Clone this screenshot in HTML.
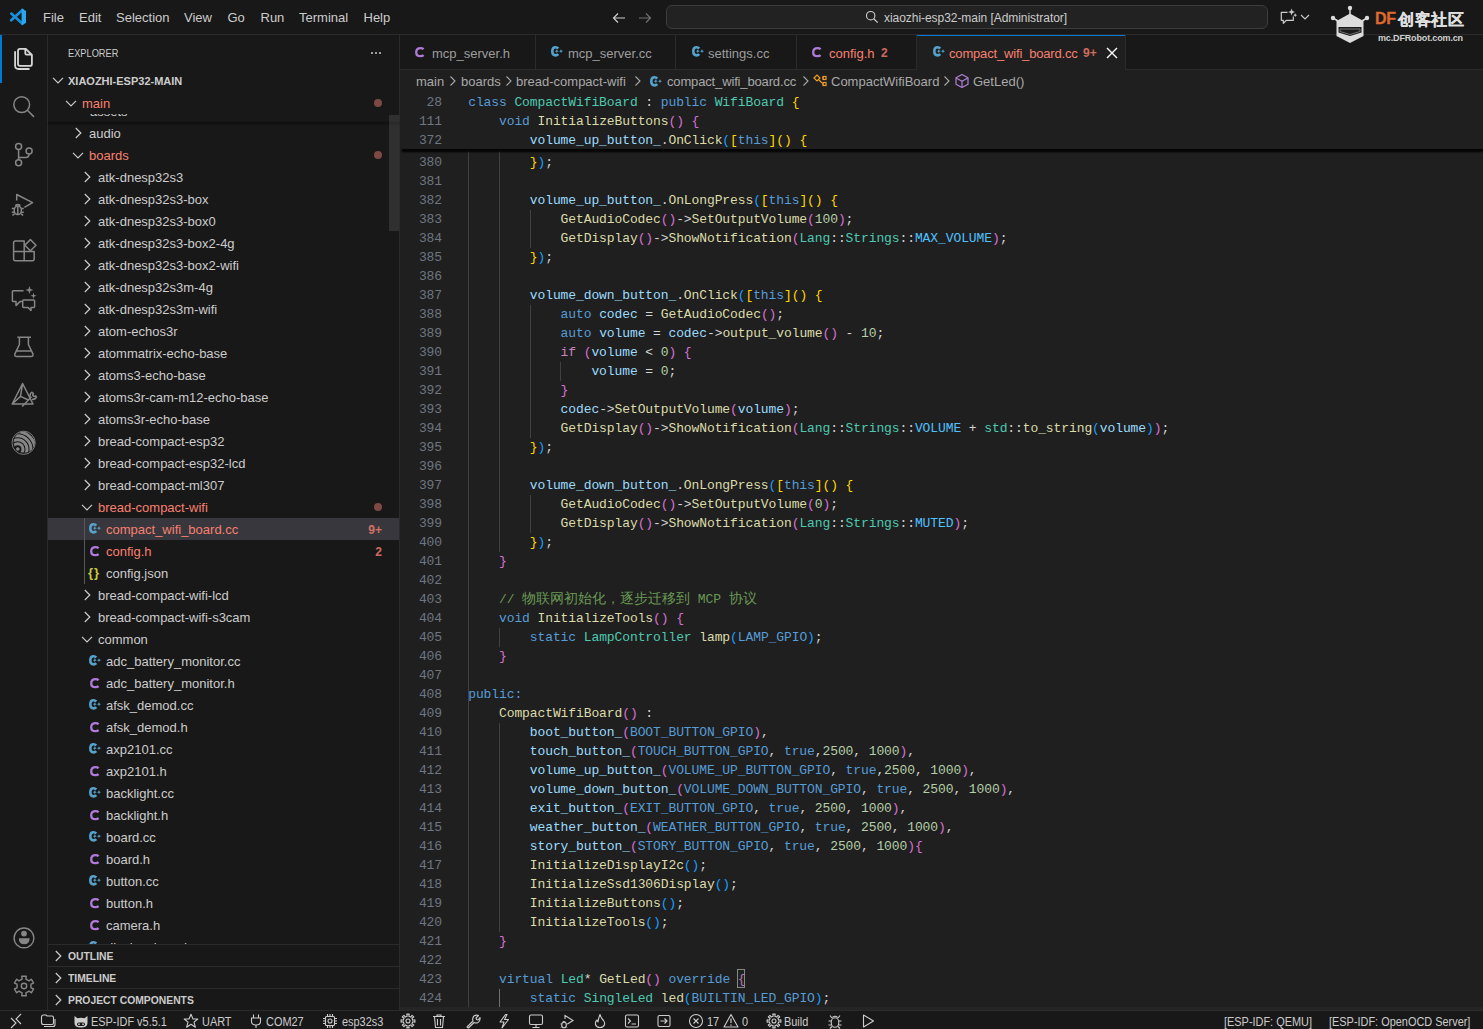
<!DOCTYPE html><html><head><meta charset="utf-8"><style>
*{margin:0;padding:0;box-sizing:border-box}
html,body{width:1483px;height:1029px;overflow:hidden;background:#181818}
body{position:relative;font-family:"Liberation Sans",sans-serif;color:#cccccc;font-size:13px}
.a{position:absolute}
.t{position:absolute;white-space:pre;line-height:1}
svg{position:absolute;overflow:visible}
.code{position:absolute;white-space:pre;font-family:"Liberation Mono",monospace;font-size:13px;letter-spacing:-0.1px;line-height:19px;height:19px;color:#d4d4d4}
.ln{position:absolute;width:40px;text-align:right;font-family:"Liberation Mono",monospace;font-size:13px;letter-spacing:-0.1px;line-height:19px;color:#6e7681}
.kw{color:#569cd6}.ctl{color:#c586c0}.ty{color:#4ec9b0}.fn{color:#dcdcaa}.v{color:#9cdcfe}.n{color:#b5cea8}
.mac{color:#569cd6}.en{color:#4fc1ff}.cm{color:#6a9955}.b1{color:#ffd700}.b2{color:#da70d6}.b3{color:#179fff}
.row{position:absolute;left:48px;width:351px;height:22px}
.rt{position:absolute;white-space:pre;font-size:13px;line-height:22px;top:0}
.err{color:#f88070}
</style></head><body>
<div class="a" style="left:0px;top:0px;width:1483px;height:34px;background:#181818;"></div>
<div class="a" style="left:0px;top:34px;width:1483px;height:1px;background:#2b2b2b;"></div>
<div class="a" style="left:47px;top:35px;width:1px;height:975px;background:#2b2b2b;"></div>
<div class="a" style="left:399px;top:35px;width:1px;height:975px;background:#2b2b2b;"></div>
<div class="a" style="left:400px;top:70px;width:1083px;height:940px;background:#1f1f1f;"></div>
<div class="a" style="left:0px;top:1010px;width:1483px;height:1px;background:#2b2b2b;"></div>
<svg style="left:0px;top:0px" width="32" height="32" viewBox="0 0 32 32">
<path d="M22.5 10L11.2 20.3M22.5 23.8L11.3 13.6" stroke="#1a8ed8" stroke-width="2.7" stroke-linecap="round"/>
<path d="M21.6 8.6L26 10.9V22.9L21.6 25.1Z" fill="#27a7f0"/>
</svg>
<div class="t" style="left:43px;top:11px;font-size:13px;color:#cccccc">File</div>
<div class="t" style="left:79px;top:11px;font-size:13px;color:#cccccc">Edit</div>
<div class="t" style="left:116px;top:11px;font-size:13px;color:#cccccc">Selection</div>
<div class="t" style="left:184px;top:11px;font-size:13px;color:#cccccc">View</div>
<div class="t" style="left:227.5px;top:11px;font-size:13px;color:#cccccc">Go</div>
<div class="t" style="left:260.5px;top:11px;font-size:13px;color:#cccccc">Run</div>
<div class="t" style="left:299px;top:11px;font-size:13px;color:#cccccc">Terminal</div>
<div class="t" style="left:363.5px;top:11px;font-size:13px;color:#cccccc">Help</div>
<svg style="left:611px;top:10px" width="16" height="16" viewBox="0 0 16 16"><path d="M14 8H2.5M7 3.5L2.5 8L7 12.5" stroke="#cccccc" stroke-width="1.2" fill="none"/></svg>
<svg style="left:637px;top:10px" width="16" height="16" viewBox="0 0 16 16"><path d="M2 8H13.5M9 3.5L13.5 8L9 12.5" stroke="#707070" stroke-width="1.2" fill="none"/></svg>
<div class="a" style="left:666px;top:5px;width:602px;height:24px;background:#222222;border:1px solid #3c3c3c;border-radius:6px;"></div>
<svg style="left:865px;top:10px" width="14" height="14" viewBox="0 0 16 16"><circle cx="6.5" cy="6.5" r="4.8" stroke="#cccccc" stroke-width="1.3" fill="none"/><path d="M10 10L14.5 14.5" stroke="#cccccc" stroke-width="1.4"/></svg>
<div class="t" style="left:884px;top:11.5px;font-size:12px;color:#cccccc;letter-spacing:-0.05px">xiaozhi-esp32-main [Administrator]</div>
<svg style="left:1270px;top:0px" width="30" height="30" viewBox="1270 0 30 30">
<path d="M1287.5 12.3H1281.3V20.3H1283.3V23.3L1286.5 20.3H1293.3V16.5" stroke="#cccccc" stroke-width="1.2" fill="none" stroke-linejoin="round"/>
<path d="M1291.6 8.6L1292.5 11.1L1295 12L1292.5 12.9L1291.6 15.4L1290.7 12.9L1288.2 12L1290.7 11.1Z" fill="#cccccc"/>
<path d="M1295.2 13.2L1295.8 14.6L1297.2 15.2L1295.8 15.8L1295.2 17.2L1294.6 15.8L1293.2 15.2L1294.6 14.6Z" fill="#cccccc"/>
</svg>
<svg style="left:1300px;top:13px" width="10" height="8" viewBox="0 0 10 8"><path d="M1 2L5 6L9 2" stroke="#cccccc" stroke-width="1.1" fill="none"/></svg>
<div class="a" style="left:400px;top:35px;width:1083px;height:35px;background:#181818;"></div>
<div class="a" style="left:400px;top:69px;width:1083px;height:1px;background:#2b2b2b;"></div>
<div class="a" style="left:535px;top:35px;width:1px;height:34px;background:#2b2b2b;"></div>
<div class="a" style="left:675px;top:35px;width:1px;height:34px;background:#2b2b2b;"></div>
<div class="a" style="left:796px;top:35px;width:1px;height:34px;background:#2b2b2b;"></div>
<div class="a" style="left:916px;top:35px;width:1px;height:34px;background:#2b2b2b;"></div>
<div class="a" style="left:917px;top:35px;width:208px;height:35px;background:#1f1f1f;"></div>
<div class="a" style="left:917px;top:35px;width:208px;height:1px;background:#0078d4;"></div>
<div class="a" style="left:1125px;top:35px;width:1px;height:34px;background:#2b2b2b;"></div>
<svg style="left:415.2px;top:46.7px" width="10" height="10.3" viewBox="0 0 10 10.3">
<path d="M8.6 2.2Q7.5 1.1 5.6 1.1Q1.2 1.1 1.2 5.15Q1.2 9.2 5.6 9.2Q7.5 9.2 8.6 8.1" stroke="#b07ad8" stroke-width="2.3" fill="none"/></svg>
<div class="t" style="left:432px;top:47px;font-size:13px;color:#9d9d9d">mcp_server.h</div>
<svg style="left:551px;top:46px" width="13" height="11" viewBox="0 0 13 11">
<path d="M7.3 2.5Q6.1 1.3 4.6 1.3Q1.3 1.3 1.3 5.35Q1.3 9.4 4.6 9.4Q6.1 9.4 7.3 8.2" stroke="#55a2cc" stroke-width="2.6" fill="none"/>
<path d="M5.8 3.2L6.4 4.6L7.8 5.2L6.4 5.8L5.8 7.2L5.2 5.8L3.8 5.2L5.2 4.6Z" fill="#55a2cc"/>
<path d="M10 3.2L10.6 4.6L12 5.2L10.6 5.8L10 7.2L9.4 5.8L8 5.2L9.4 4.6Z" fill="#55a2cc"/>
</svg>
<div class="t" style="left:568px;top:47px;font-size:13px;color:#9d9d9d">mcp_server.cc</div>
<svg style="left:692px;top:46px" width="13" height="11" viewBox="0 0 13 11">
<path d="M7.3 2.5Q6.1 1.3 4.6 1.3Q1.3 1.3 1.3 5.35Q1.3 9.4 4.6 9.4Q6.1 9.4 7.3 8.2" stroke="#55a2cc" stroke-width="2.6" fill="none"/>
<path d="M5.8 3.2L6.4 4.6L7.8 5.2L6.4 5.8L5.8 7.2L5.2 5.8L3.8 5.2L5.2 4.6Z" fill="#55a2cc"/>
<path d="M10 3.2L10.6 4.6L12 5.2L10.6 5.8L10 7.2L9.4 5.8L8 5.2L9.4 4.6Z" fill="#55a2cc"/>
</svg>
<div class="t" style="left:708px;top:47px;font-size:13px;color:#9d9d9d">settings.cc</div>
<svg style="left:812.2px;top:46.7px" width="10" height="10.3" viewBox="0 0 10 10.3">
<path d="M8.6 2.2Q7.5 1.1 5.6 1.1Q1.2 1.1 1.2 5.15Q1.2 9.2 5.6 9.2Q7.5 9.2 8.6 8.1" stroke="#b07ad8" stroke-width="2.3" fill="none"/></svg>
<div class="t" style="left:829px;top:47px;font-size:13px;color:#f88070">config.h</div>
<div class="t" style="left:881px;top:47px;font-size:12px;font-weight:bold;color:#f88070;opacity:.8">2</div>
<svg style="left:933px;top:46px" width="13" height="11" viewBox="0 0 13 11">
<path d="M7.3 2.5Q6.1 1.3 4.6 1.3Q1.3 1.3 1.3 5.35Q1.3 9.4 4.6 9.4Q6.1 9.4 7.3 8.2" stroke="#55a2cc" stroke-width="2.6" fill="none"/>
<path d="M5.8 3.2L6.4 4.6L7.8 5.2L6.4 5.8L5.8 7.2L5.2 5.8L3.8 5.2L5.2 4.6Z" fill="#55a2cc"/>
<path d="M10 3.2L10.6 4.6L12 5.2L10.6 5.8L10 7.2L9.4 5.8L8 5.2L9.4 4.6Z" fill="#55a2cc"/>
</svg>
<div class="t" style="left:949px;top:47px;font-size:13px;color:#f88070;letter-spacing:-0.17px">compact_wifi_board.cc</div>
<div class="t" style="left:1083px;top:47px;font-size:12px;font-weight:bold;color:#f88070;opacity:.8">9+</div>
<svg style="left:1104px;top:45px" width="16" height="16" viewBox="0 0 16 16"><path d="M3 3L13 13M13 3L3 13" stroke="#ffffff" stroke-width="1.4"/></svg>
<div class="t" style="left:416px;top:74.5px;font-size:13px;color:#a9a9a9">main</div>
<svg style="left:449px;top:75px" width="8" height="12" viewBox="0 0 8 12"><path d="M1.5 1.5L6 6L1.5 10.5" stroke="#a9a9a9" stroke-width="1.1" fill="none"/></svg>
<div class="t" style="left:461px;top:74.5px;font-size:13px;color:#a9a9a9">boards</div>
<svg style="left:505px;top:75px" width="8" height="12" viewBox="0 0 8 12"><path d="M1.5 1.5L6 6L1.5 10.5" stroke="#a9a9a9" stroke-width="1.1" fill="none"/></svg>
<div class="t" style="left:516px;top:74.5px;font-size:13px;color:#a9a9a9">bread-compact-wifi</div>
<svg style="left:634px;top:75px" width="8" height="12" viewBox="0 0 8 12"><path d="M1.5 1.5L6 6L1.5 10.5" stroke="#a9a9a9" stroke-width="1.1" fill="none"/></svg>
<svg style="left:649.9px;top:75.6px" width="13" height="11" viewBox="0 0 13 11">
<path d="M7.3 2.5Q6.1 1.3 4.6 1.3Q1.3 1.3 1.3 5.35Q1.3 9.4 4.6 9.4Q6.1 9.4 7.3 8.2" stroke="#55a2cc" stroke-width="2.6" fill="none"/>
<path d="M5.8 3.2L6.4 4.6L7.8 5.2L6.4 5.8L5.8 7.2L5.2 5.8L3.8 5.2L5.2 4.6Z" fill="#55a2cc"/>
<path d="M10 3.2L10.6 4.6L12 5.2L10.6 5.8L10 7.2L9.4 5.8L8 5.2L9.4 4.6Z" fill="#55a2cc"/>
</svg>
<div class="t" style="left:667px;top:74.5px;font-size:13px;color:#a9a9a9;letter-spacing:-0.15px">compact_wifi_board.cc</div>
<svg style="left:802px;top:75px" width="8" height="12" viewBox="0 0 8 12"><path d="M1.5 1.5L6 6L1.5 10.5" stroke="#a9a9a9" stroke-width="1.1" fill="none"/></svg>
<svg style="left:812px;top:73px" width="16" height="16" viewBox="0 0 16 16">
<path d="M2 5L5 2L8 5L5 8Z" stroke="#ee9d28" stroke-width="1.2" fill="none"/>
<path d="M6.5 6.5L10 10M10 5H12M12 11H10" stroke="#ee9d28" stroke-width="1.2" fill="none"/>
<rect x="11" y="3.5" width="3" height="3" stroke="#ee9d28" stroke-width="1.2" fill="none"/>
<rect x="11" y="9.5" width="3" height="3" stroke="#ee9d28" stroke-width="1.2" fill="none"/></svg>
<div class="t" style="left:831px;top:74.5px;font-size:13px;color:#a9a9a9">CompactWifiBoard</div>
<svg style="left:943px;top:75px" width="8" height="12" viewBox="0 0 8 12"><path d="M1.5 1.5L6 6L1.5 10.5" stroke="#a9a9a9" stroke-width="1.1" fill="none"/></svg>
<svg style="left:954px;top:73px" width="16" height="16" viewBox="0 0 16 16">
<path d="M8 1.5L14 4.8V11.2L8 14.5L2 11.2V4.8Z" stroke="#b180d7" stroke-width="1.2" fill="none" stroke-linejoin="round"/>
<path d="M2.2 5L8 8.2L13.8 5M8 8.2V14.3" stroke="#b180d7" stroke-width="1.2" fill="none"/></svg>
<div class="t" style="left:973px;top:74.5px;font-size:13px;color:#a9a9a9">GetLed()</div>
<svg style="left:1325px;top:0px" width="150" height="50" viewBox="0 0 150 50">
<circle cx="25" cy="8" r="2.2" fill="#dcdcdc"/>
<path d="M25 8V14" stroke="#dcdcdc" stroke-width="1.5"/>
<circle cx="8" cy="18" r="2.2" fill="#dcdcdc"/>
<circle cx="42" cy="18" r="2.2" fill="#dcdcdc"/>
<path d="M8 18L13 21M42 18L37 21" stroke="#dcdcdc" stroke-width="1.5"/>
<path d="M25 13.5L38.5 21V36L25 43L11.5 36V21Z" fill="#dcdcdc"/>
<path d="M13.5 27H36.5V32.5L25 36L13.5 32.5Z" fill="#1a1a1a"/>
<path d="M15 29H35V31.5L25 34.5L15 31.5Z" fill="#1a1a1a" stroke="#8a8a8a" stroke-width="0.8"/>
</svg>
<div class="t" style="left:1375px;top:11px;font-size:16px;font-weight:bold;color:#dd6a2c;letter-spacing:-0.3px;-webkit-text-stroke:0.3px #dd6a2c">DF</div>
<div class="t" style="left:1398px;top:11px;font-size:16.3px;color:#e0e0e0;font-weight:bold;letter-spacing:0.6px;-webkit-text-stroke:0.15px #e0e0e0">创客社区</div>
<div class="t" style="left:1378px;top:34px;font-size:9px;font-weight:bold;color:#d0d0d0;letter-spacing:-0.15px">mc.DFRobot.com.cn</div>
<div class="a" style="left:0px;top:35px;width:2px;height:48px;background:#0078d4;"></div>
<svg style="left:0px;top:0px" width="48" height="470" viewBox="0 0 48 470">
<g transform="translate(12 46)">
<path d="M8 2.9H13.8L19.9 9V17.9Q19.9 19.9 17.9 19.9H8Q6 19.9 6 17.9V4.9Q6 2.9 8 2.9Z" stroke="#d7d7d7" stroke-width="1.8" fill="none" stroke-linejoin="round"/>
<path d="M13.3 3V7.2Q13.3 8.6 14.7 8.6H19.8" stroke="#d7d7d7" stroke-width="1.8" fill="none"/>
<path d="M3.1 5.3V19.5Q3.1 23 6.6 23H17.5" stroke="#d7d7d7" stroke-width="1.8" fill="none"/>
</g>
<circle cx="21.7" cy="104.6" r="7.9" stroke="#868686" fill="none" stroke-width="1.5" stroke-linejoin="round"/>
<path d="M27.4 110.3L34 116.9" stroke="#868686" fill="none" stroke-width="1.5" stroke-linejoin="round" stroke-width="1.7"/>
<circle cx="18.6" cy="146.6" r="3" stroke="#868686" fill="none" stroke-width="1.5" stroke-linejoin="round"/>
<circle cx="18.6" cy="162.8" r="3" stroke="#868686" fill="none" stroke-width="1.5" stroke-linejoin="round"/>
<circle cx="29.1" cy="151" r="3" stroke="#868686" fill="none" stroke-width="1.5" stroke-linejoin="round"/>
<path d="M18.6 149.6V159.8M29.1 154Q29.1 157.5 25.5 157.5H18.6" stroke="#868686" fill="none" stroke-width="1.5" stroke-linejoin="round"/>
<path d="M16.7 200.5V194.5L32.6 202.6L24.4 207.3" stroke="#868686" fill="none" stroke-width="1.5" stroke-linejoin="round"/>
<ellipse cx="17.8" cy="210.3" rx="3.6" ry="4.3" stroke="#868686" fill="none" stroke-width="1.5" stroke-linejoin="round"/>
<path d="M15.2 205.8Q17.8 203.5 20.4 205.8M11.8 208.5H14.2M21.4 208.5H23.8M11.8 212.2H14.2M21.4 212.2H23.8M12.5 215.5L14.6 213.6M23.1 215.5L21 213.6M17.8 206.5V214.2" stroke="#868686" fill="none" stroke-width="1.5" stroke-linejoin="round" stroke-width="1.3"/>
<path d="M13.6 242.8Q13.6 241 15.4 241H24.2V251.4H34.2V259Q34.2 260.7 32.4 260.7H15.4Q13.6 260.7 13.6 259Z M13.6 251.4H24.2V260.7" stroke="#868686" fill="none" stroke-width="1.5" stroke-linejoin="round"/>
<path d="M30.4 239.6L36 245.2L30.4 250.8L24.8 245.2Z" stroke="#868686" fill="none" stroke-width="1.5" stroke-linejoin="round"/>
<path d="M13.2 290.8H23.5M13.2 290.8Q12.4 290.8 12.4 291.6V300.8Q12.4 301.6 13.2 301.6H16V305.6L20 301.6H22.7" stroke="#868686" fill="none" stroke-width="1.5" stroke-linejoin="round"/>
<path d="M23.5 300H33.8Q34.6 300 34.6 300.8V306.6Q34.6 307.4 33.8 307.4H31V310.5L27.8 307.4H23.5Q22.7 307.4 22.7 306.6V300.8Q22.7 300 23.5 300Z" stroke="#868686" fill="none" stroke-width="1.5" stroke-linejoin="round"/>
<path d="M29.4 286L30.4 289L33.4 290L30.4 291L29.4 294L28.4 291L25.4 290L28.4 289Z" fill="#868686"/>
<path d="M33.5 292.6L34.2 295.1L36.7 295.8L34.2 296.5L33.5 299L32.8 296.5L30.3 295.8L32.8 295.1Z" fill="#868686"/>
<path d="M17.3 337.2H31M19.4 337.2V344.5L14.9 353.8Q14.2 356.5 16.8 356.5H31Q33.6 356.5 32.9 353.8L28.4 344.5V337.2M16.2 351H31.6" stroke="#868686" fill="none" stroke-width="1.5" stroke-linejoin="round"/>
<path d="M22.6 383.5L12.2 404H33L22.6 383.5L20.5 396.4L12.2 404M20.5 396.4L28.4 400" stroke="#868686" fill="none" stroke-width="1.5" stroke-linejoin="round"/>
<path d="M22.2 406.6L31.5 396.8" stroke="#868686" fill="none" stroke-width="1.5" stroke-linejoin="round" stroke-width="1.7"/>
<path d="M30.5 398Q29 394 32 392.2L33.4 393.6L32.6 395.2L34.1 396.6L35.5 395.8L36.5 397.2Q35 400 32 399.2" stroke="#868686" fill="none" stroke-width="1.5" stroke-linejoin="round" stroke-width="1.4"/>
<circle cx="23.6" cy="442.8" r="11.6" stroke="#868686" stroke-width="0.9" fill="none"/>
<clipPath id="espc"><circle cx="24.3" cy="442.2" r="10.6"/></clipPath>
<g clip-path="url(#espc)" stroke="#868686" fill="none" stroke-width="3">
<circle cx="17.6" cy="449.2" r="5.4"/>
<circle cx="17.6" cy="449.2" r="9.4"/>
<circle cx="17.6" cy="449.2" r="13.4"/>
<circle cx="17.6" cy="449.2" r="17.4"/>
</g>
<circle cx="17.8" cy="449" r="1.8" fill="#868686"/>
</svg>
<svg style="left:0px;top:900px" width="48" height="110" viewBox="0 900 48 110"><circle cx="24" cy="937.9" r="9.9" stroke="#868686" stroke-width="1.4" fill="none"/>
<circle cx="24" cy="933.6" r="2.9" fill="#868686"/>
<path d="M18.8 938.3H29.6Q29.6 944.3 24.2 944.3Q18.8 944.3 18.8 938.3Z" fill="#868686"/>
</svg>
<svg style="left:0px;top:900px" width="48" height="110" viewBox="0 900 48 110"><path d="M21.75 976.26 L26.25 976.26 L25.86 979.05 L29.09 980.91 L31.31 979.18 L33.56 983.08 L30.95 984.14 L30.95 987.86 L33.56 988.92 L31.31 992.82 L29.09 991.09 L25.86 992.95 L26.25 995.74 L21.75 995.74 L22.14 992.95 L18.91 991.09 L16.69 992.82 L14.44 988.92 L17.05 987.86 L17.05 984.14 L14.44 983.08 L16.69 979.18 L18.91 980.91 L22.14 979.05Z" stroke="#868686" stroke-width="1.4" fill="none" stroke-linejoin="round"/><circle cx="24" cy="986" r="2.7" stroke="#868686" stroke-width="1.4" fill="none"/></svg>
<div class="t" style="left:68px;top:47.5px;font-size:11px;color:#cccccc;transform:scaleX(0.84);transform-origin:0 0">EXPLORER</div>
<div class="a" style="left:371px;top:52px;width:2px;height:2px;background:#cccccc;border-radius:1px"></div>
<div class="a" style="left:375px;top:52px;width:2px;height:2px;background:#cccccc;border-radius:1px"></div>
<div class="a" style="left:379px;top:52px;width:2px;height:2px;background:#cccccc;border-radius:1px"></div>
<svg style="left:50px;top:72px" width="16" height="16" viewBox="0 0 16 16"><path d="M3 5.8L8 10.8L13 5.8" stroke="#cccccc" stroke-width="1.2" fill="none"/></svg>
<div class="t" style="left:68px;top:75.5px;font-size:11px;font-weight:bold;color:#cccccc">XIAOZHI-ESP32-MAIN</div>
<div class="a" style="left:48px;top:518px;width:351px;height:22px;background:#37373d;"></div>
<div class="a" style="left:84px;top:518px;width:1px;height:66px;background:#585858;"></div>
<svg style="left:70px;top:125px" width="16" height="16" viewBox="0 0 16 16"><path d="M5.8 3L10.8 8L5.8 13" stroke="#cccccc" stroke-width="1.2" fill="none"/></svg>
<div class="t" style="left:89px;top:126.5px;font-size:13px;color:#cccccc">audio</div>
<svg style="left:70px;top:147px" width="16" height="16" viewBox="0 0 16 16"><path d="M3 5.8L8 10.8L13 5.8" stroke="#cccccc" stroke-width="1.2" fill="none"/></svg>
<div class="t" style="left:89px;top:148.5px;font-size:13px;color:#f88070">boards</div>
<div class="a" style="left:374px;top:151px;width:8px;height:8px;background:#7d4944;border-radius:50%"></div>
<svg style="left:79px;top:169px" width="16" height="16" viewBox="0 0 16 16"><path d="M5.8 3L10.8 8L5.8 13" stroke="#cccccc" stroke-width="1.2" fill="none"/></svg>
<div class="t" style="left:98px;top:170.5px;font-size:13px;color:#cccccc">atk-dnesp32s3</div>
<svg style="left:79px;top:191px" width="16" height="16" viewBox="0 0 16 16"><path d="M5.8 3L10.8 8L5.8 13" stroke="#cccccc" stroke-width="1.2" fill="none"/></svg>
<div class="t" style="left:98px;top:192.5px;font-size:13px;color:#cccccc">atk-dnesp32s3-box</div>
<svg style="left:79px;top:213px" width="16" height="16" viewBox="0 0 16 16"><path d="M5.8 3L10.8 8L5.8 13" stroke="#cccccc" stroke-width="1.2" fill="none"/></svg>
<div class="t" style="left:98px;top:214.5px;font-size:13px;color:#cccccc">atk-dnesp32s3-box0</div>
<svg style="left:79px;top:235px" width="16" height="16" viewBox="0 0 16 16"><path d="M5.8 3L10.8 8L5.8 13" stroke="#cccccc" stroke-width="1.2" fill="none"/></svg>
<div class="t" style="left:98px;top:236.5px;font-size:13px;color:#cccccc">atk-dnesp32s3-box2-4g</div>
<svg style="left:79px;top:257px" width="16" height="16" viewBox="0 0 16 16"><path d="M5.8 3L10.8 8L5.8 13" stroke="#cccccc" stroke-width="1.2" fill="none"/></svg>
<div class="t" style="left:98px;top:258.5px;font-size:13px;color:#cccccc">atk-dnesp32s3-box2-wifi</div>
<svg style="left:79px;top:279px" width="16" height="16" viewBox="0 0 16 16"><path d="M5.8 3L10.8 8L5.8 13" stroke="#cccccc" stroke-width="1.2" fill="none"/></svg>
<div class="t" style="left:98px;top:280.5px;font-size:13px;color:#cccccc">atk-dnesp32s3m-4g</div>
<svg style="left:79px;top:301px" width="16" height="16" viewBox="0 0 16 16"><path d="M5.8 3L10.8 8L5.8 13" stroke="#cccccc" stroke-width="1.2" fill="none"/></svg>
<div class="t" style="left:98px;top:302.5px;font-size:13px;color:#cccccc">atk-dnesp32s3m-wifi</div>
<svg style="left:79px;top:323px" width="16" height="16" viewBox="0 0 16 16"><path d="M5.8 3L10.8 8L5.8 13" stroke="#cccccc" stroke-width="1.2" fill="none"/></svg>
<div class="t" style="left:98px;top:324.5px;font-size:13px;color:#cccccc">atom-echos3r</div>
<svg style="left:79px;top:345px" width="16" height="16" viewBox="0 0 16 16"><path d="M5.8 3L10.8 8L5.8 13" stroke="#cccccc" stroke-width="1.2" fill="none"/></svg>
<div class="t" style="left:98px;top:346.5px;font-size:13px;color:#cccccc">atommatrix-echo-base</div>
<svg style="left:79px;top:367px" width="16" height="16" viewBox="0 0 16 16"><path d="M5.8 3L10.8 8L5.8 13" stroke="#cccccc" stroke-width="1.2" fill="none"/></svg>
<div class="t" style="left:98px;top:368.5px;font-size:13px;color:#cccccc">atoms3-echo-base</div>
<svg style="left:79px;top:389px" width="16" height="16" viewBox="0 0 16 16"><path d="M5.8 3L10.8 8L5.8 13" stroke="#cccccc" stroke-width="1.2" fill="none"/></svg>
<div class="t" style="left:98px;top:390.5px;font-size:13px;color:#cccccc">atoms3r-cam-m12-echo-base</div>
<svg style="left:79px;top:411px" width="16" height="16" viewBox="0 0 16 16"><path d="M5.8 3L10.8 8L5.8 13" stroke="#cccccc" stroke-width="1.2" fill="none"/></svg>
<div class="t" style="left:98px;top:412.5px;font-size:13px;color:#cccccc">atoms3r-echo-base</div>
<svg style="left:79px;top:433px" width="16" height="16" viewBox="0 0 16 16"><path d="M5.8 3L10.8 8L5.8 13" stroke="#cccccc" stroke-width="1.2" fill="none"/></svg>
<div class="t" style="left:98px;top:434.5px;font-size:13px;color:#cccccc">bread-compact-esp32</div>
<svg style="left:79px;top:455px" width="16" height="16" viewBox="0 0 16 16"><path d="M5.8 3L10.8 8L5.8 13" stroke="#cccccc" stroke-width="1.2" fill="none"/></svg>
<div class="t" style="left:98px;top:456.5px;font-size:13px;color:#cccccc">bread-compact-esp32-lcd</div>
<svg style="left:79px;top:477px" width="16" height="16" viewBox="0 0 16 16"><path d="M5.8 3L10.8 8L5.8 13" stroke="#cccccc" stroke-width="1.2" fill="none"/></svg>
<div class="t" style="left:98px;top:478.5px;font-size:13px;color:#cccccc">bread-compact-ml307</div>
<svg style="left:79px;top:499px" width="16" height="16" viewBox="0 0 16 16"><path d="M3 5.8L8 10.8L13 5.8" stroke="#cccccc" stroke-width="1.2" fill="none"/></svg>
<div class="t" style="left:98px;top:500.5px;font-size:13px;color:#f88070">bread-compact-wifi</div>
<div class="a" style="left:374px;top:503px;width:8px;height:8px;background:#7d4944;border-radius:50%"></div>
<svg style="left:88.7px;top:522.8px" width="13" height="11" viewBox="0 0 13 11">
<path d="M7.3 2.5Q6.1 1.3 4.6 1.3Q1.3 1.3 1.3 5.35Q1.3 9.4 4.6 9.4Q6.1 9.4 7.3 8.2" stroke="#55a2cc" stroke-width="2.6" fill="none"/>
<path d="M5.8 3.2L6.4 4.6L7.8 5.2L6.4 5.8L5.8 7.2L5.2 5.8L3.8 5.2L5.2 4.6Z" fill="#55a2cc"/>
<path d="M10 3.2L10.6 4.6L12 5.2L10.6 5.8L10 7.2L9.4 5.8L8 5.2L9.4 4.6Z" fill="#55a2cc"/>
</svg>
<div class="t" style="left:106px;top:522.5px;font-size:13px;color:#f88070">compact_wifi_board.cc</div>
<div class="t" style="left:0px;top:523.5px;font-size:12px;font-weight:bold;color:#f88070;opacity:.8;right:1101px;left:auto">9+</div>
<svg style="left:89.5px;top:546px" width="10" height="10.3" viewBox="0 0 10 10.3">
<path d="M8.6 2.2Q7.5 1.1 5.6 1.1Q1.2 1.1 1.2 5.15Q1.2 9.2 5.6 9.2Q7.5 9.2 8.6 8.1" stroke="#b07ad8" stroke-width="2.3" fill="none"/></svg>
<div class="t" style="left:106px;top:544.5px;font-size:13px;color:#f88070">config.h</div>
<div class="t" style="left:0px;top:545.5px;font-size:12px;font-weight:bold;color:#f88070;opacity:.8;right:1101px;left:auto">2</div>
<div class="t" style="left:88px;top:566px;font-size:13px;font-weight:bold;color:#cbcb41;letter-spacing:1px">{}</div>
<div class="t" style="left:106px;top:566.5px;font-size:13px;color:#cccccc">config.json</div>
<svg style="left:79px;top:587px" width="16" height="16" viewBox="0 0 16 16"><path d="M5.8 3L10.8 8L5.8 13" stroke="#cccccc" stroke-width="1.2" fill="none"/></svg>
<div class="t" style="left:98px;top:588.5px;font-size:13px;color:#cccccc">bread-compact-wifi-lcd</div>
<svg style="left:79px;top:609px" width="16" height="16" viewBox="0 0 16 16"><path d="M5.8 3L10.8 8L5.8 13" stroke="#cccccc" stroke-width="1.2" fill="none"/></svg>
<div class="t" style="left:98px;top:610.5px;font-size:13px;color:#cccccc">bread-compact-wifi-s3cam</div>
<svg style="left:79px;top:631px" width="16" height="16" viewBox="0 0 16 16"><path d="M3 5.8L8 10.8L13 5.8" stroke="#cccccc" stroke-width="1.2" fill="none"/></svg>
<div class="t" style="left:98px;top:632.5px;font-size:13px;color:#cccccc">common</div>
<svg style="left:88.7px;top:654.8px" width="13" height="11" viewBox="0 0 13 11">
<path d="M7.3 2.5Q6.1 1.3 4.6 1.3Q1.3 1.3 1.3 5.35Q1.3 9.4 4.6 9.4Q6.1 9.4 7.3 8.2" stroke="#55a2cc" stroke-width="2.6" fill="none"/>
<path d="M5.8 3.2L6.4 4.6L7.8 5.2L6.4 5.8L5.8 7.2L5.2 5.8L3.8 5.2L5.2 4.6Z" fill="#55a2cc"/>
<path d="M10 3.2L10.6 4.6L12 5.2L10.6 5.8L10 7.2L9.4 5.8L8 5.2L9.4 4.6Z" fill="#55a2cc"/>
</svg>
<div class="t" style="left:106px;top:654.5px;font-size:13px;color:#cccccc">adc_battery_monitor.cc</div>
<svg style="left:89.5px;top:678px" width="10" height="10.3" viewBox="0 0 10 10.3">
<path d="M8.6 2.2Q7.5 1.1 5.6 1.1Q1.2 1.1 1.2 5.15Q1.2 9.2 5.6 9.2Q7.5 9.2 8.6 8.1" stroke="#b07ad8" stroke-width="2.3" fill="none"/></svg>
<div class="t" style="left:106px;top:676.5px;font-size:13px;color:#cccccc">adc_battery_monitor.h</div>
<svg style="left:88.7px;top:698.8px" width="13" height="11" viewBox="0 0 13 11">
<path d="M7.3 2.5Q6.1 1.3 4.6 1.3Q1.3 1.3 1.3 5.35Q1.3 9.4 4.6 9.4Q6.1 9.4 7.3 8.2" stroke="#55a2cc" stroke-width="2.6" fill="none"/>
<path d="M5.8 3.2L6.4 4.6L7.8 5.2L6.4 5.8L5.8 7.2L5.2 5.8L3.8 5.2L5.2 4.6Z" fill="#55a2cc"/>
<path d="M10 3.2L10.6 4.6L12 5.2L10.6 5.8L10 7.2L9.4 5.8L8 5.2L9.4 4.6Z" fill="#55a2cc"/>
</svg>
<div class="t" style="left:106px;top:698.5px;font-size:13px;color:#cccccc">afsk_demod.cc</div>
<svg style="left:89.5px;top:722px" width="10" height="10.3" viewBox="0 0 10 10.3">
<path d="M8.6 2.2Q7.5 1.1 5.6 1.1Q1.2 1.1 1.2 5.15Q1.2 9.2 5.6 9.2Q7.5 9.2 8.6 8.1" stroke="#b07ad8" stroke-width="2.3" fill="none"/></svg>
<div class="t" style="left:106px;top:720.5px;font-size:13px;color:#cccccc">afsk_demod.h</div>
<svg style="left:88.7px;top:742.8px" width="13" height="11" viewBox="0 0 13 11">
<path d="M7.3 2.5Q6.1 1.3 4.6 1.3Q1.3 1.3 1.3 5.35Q1.3 9.4 4.6 9.4Q6.1 9.4 7.3 8.2" stroke="#55a2cc" stroke-width="2.6" fill="none"/>
<path d="M5.8 3.2L6.4 4.6L7.8 5.2L6.4 5.8L5.8 7.2L5.2 5.8L3.8 5.2L5.2 4.6Z" fill="#55a2cc"/>
<path d="M10 3.2L10.6 4.6L12 5.2L10.6 5.8L10 7.2L9.4 5.8L8 5.2L9.4 4.6Z" fill="#55a2cc"/>
</svg>
<div class="t" style="left:106px;top:742.5px;font-size:13px;color:#cccccc">axp2101.cc</div>
<svg style="left:89.5px;top:766px" width="10" height="10.3" viewBox="0 0 10 10.3">
<path d="M8.6 2.2Q7.5 1.1 5.6 1.1Q1.2 1.1 1.2 5.15Q1.2 9.2 5.6 9.2Q7.5 9.2 8.6 8.1" stroke="#b07ad8" stroke-width="2.3" fill="none"/></svg>
<div class="t" style="left:106px;top:764.5px;font-size:13px;color:#cccccc">axp2101.h</div>
<svg style="left:88.7px;top:786.8px" width="13" height="11" viewBox="0 0 13 11">
<path d="M7.3 2.5Q6.1 1.3 4.6 1.3Q1.3 1.3 1.3 5.35Q1.3 9.4 4.6 9.4Q6.1 9.4 7.3 8.2" stroke="#55a2cc" stroke-width="2.6" fill="none"/>
<path d="M5.8 3.2L6.4 4.6L7.8 5.2L6.4 5.8L5.8 7.2L5.2 5.8L3.8 5.2L5.2 4.6Z" fill="#55a2cc"/>
<path d="M10 3.2L10.6 4.6L12 5.2L10.6 5.8L10 7.2L9.4 5.8L8 5.2L9.4 4.6Z" fill="#55a2cc"/>
</svg>
<div class="t" style="left:106px;top:786.5px;font-size:13px;color:#cccccc">backlight.cc</div>
<svg style="left:89.5px;top:810px" width="10" height="10.3" viewBox="0 0 10 10.3">
<path d="M8.6 2.2Q7.5 1.1 5.6 1.1Q1.2 1.1 1.2 5.15Q1.2 9.2 5.6 9.2Q7.5 9.2 8.6 8.1" stroke="#b07ad8" stroke-width="2.3" fill="none"/></svg>
<div class="t" style="left:106px;top:808.5px;font-size:13px;color:#cccccc">backlight.h</div>
<svg style="left:88.7px;top:830.8px" width="13" height="11" viewBox="0 0 13 11">
<path d="M7.3 2.5Q6.1 1.3 4.6 1.3Q1.3 1.3 1.3 5.35Q1.3 9.4 4.6 9.4Q6.1 9.4 7.3 8.2" stroke="#55a2cc" stroke-width="2.6" fill="none"/>
<path d="M5.8 3.2L6.4 4.6L7.8 5.2L6.4 5.8L5.8 7.2L5.2 5.8L3.8 5.2L5.2 4.6Z" fill="#55a2cc"/>
<path d="M10 3.2L10.6 4.6L12 5.2L10.6 5.8L10 7.2L9.4 5.8L8 5.2L9.4 4.6Z" fill="#55a2cc"/>
</svg>
<div class="t" style="left:106px;top:830.5px;font-size:13px;color:#cccccc">board.cc</div>
<svg style="left:89.5px;top:854px" width="10" height="10.3" viewBox="0 0 10 10.3">
<path d="M8.6 2.2Q7.5 1.1 5.6 1.1Q1.2 1.1 1.2 5.15Q1.2 9.2 5.6 9.2Q7.5 9.2 8.6 8.1" stroke="#b07ad8" stroke-width="2.3" fill="none"/></svg>
<div class="t" style="left:106px;top:852.5px;font-size:13px;color:#cccccc">board.h</div>
<svg style="left:88.7px;top:874.8px" width="13" height="11" viewBox="0 0 13 11">
<path d="M7.3 2.5Q6.1 1.3 4.6 1.3Q1.3 1.3 1.3 5.35Q1.3 9.4 4.6 9.4Q6.1 9.4 7.3 8.2" stroke="#55a2cc" stroke-width="2.6" fill="none"/>
<path d="M5.8 3.2L6.4 4.6L7.8 5.2L6.4 5.8L5.8 7.2L5.2 5.8L3.8 5.2L5.2 4.6Z" fill="#55a2cc"/>
<path d="M10 3.2L10.6 4.6L12 5.2L10.6 5.8L10 7.2L9.4 5.8L8 5.2L9.4 4.6Z" fill="#55a2cc"/>
</svg>
<div class="t" style="left:106px;top:874.5px;font-size:13px;color:#cccccc">button.cc</div>
<svg style="left:89.5px;top:898px" width="10" height="10.3" viewBox="0 0 10 10.3">
<path d="M8.6 2.2Q7.5 1.1 5.6 1.1Q1.2 1.1 1.2 5.15Q1.2 9.2 5.6 9.2Q7.5 9.2 8.6 8.1" stroke="#b07ad8" stroke-width="2.3" fill="none"/></svg>
<div class="t" style="left:106px;top:896.5px;font-size:13px;color:#cccccc">button.h</div>
<svg style="left:89.5px;top:920px" width="10" height="10.3" viewBox="0 0 10 10.3">
<path d="M8.6 2.2Q7.5 1.1 5.6 1.1Q1.2 1.1 1.2 5.15Q1.2 9.2 5.6 9.2Q7.5 9.2 8.6 8.1" stroke="#b07ad8" stroke-width="2.3" fill="none"/></svg>
<div class="t" style="left:106px;top:918.5px;font-size:13px;color:#cccccc">camera.h</div>
<svg style="left:88.7px;top:940.8px" width="13" height="11" viewBox="0 0 13 11">
<path d="M7.3 2.5Q6.1 1.3 4.6 1.3Q1.3 1.3 1.3 5.35Q1.3 9.4 4.6 9.4Q6.1 9.4 7.3 8.2" stroke="#55a2cc" stroke-width="2.6" fill="none"/>
<path d="M5.8 3.2L6.4 4.6L7.8 5.2L6.4 5.8L5.8 7.2L5.2 5.8L3.8 5.2L5.2 4.6Z" fill="#55a2cc"/>
<path d="M10 3.2L10.6 4.6L12 5.2L10.6 5.8L10 7.2L9.4 5.8L8 5.2L9.4 4.6Z" fill="#55a2cc"/>
</svg>
<div class="t" style="left:106px;top:940.5px;font-size:13px;color:#cccccc">display_board.cc</div>
<div class="t" style="left:90px;top:104.5px;font-size:13px;color:#cccccc">assets</div>
<div class="a" style="left:48px;top:91px;width:351px;height:22.5px;background:#181818;"></div>
<div class="a" style="left:48px;top:122px;width:351px;height:1px;background:#111111;box-shadow:0 1px 2px #0a0a0a"></div>
<svg style="left:63px;top:95px" width="16" height="16" viewBox="0 0 16 16"><path d="M3 5.8L8 10.8L13 5.8" stroke="#cccccc" stroke-width="1.2" fill="none"/></svg>
<div class="t" style="left:82px;top:96.5px;font-size:13px;color:#f88070">main</div>
<div class="a" style="left:374px;top:99px;width:8px;height:8px;background:#7d4944;border-radius:50%"></div>
<div class="a" style="left:389px;top:115px;width:10px;height:116px;background:rgba(121,121,121,0.25);"></div>
<div class="a" style="left:48px;top:944px;width:351px;height:22px;background:#181818;"></div>
<div class="a" style="left:48px;top:944px;width:351px;height:1px;background:#2b2b2b;"></div>
<svg style="left:50px;top:948px" width="16" height="16" viewBox="0 0 16 16"><path d="M5.8 3L10.8 8L5.8 13" stroke="#cccccc" stroke-width="1.2" fill="none"/></svg>
<div class="t" style="left:68px;top:951px;font-size:11px;font-weight:bold;color:#cccccc;transform:scaleX(0.94);transform-origin:0 0">OUTLINE</div>
<div class="a" style="left:48px;top:966px;width:351px;height:22px;background:#181818;"></div>
<div class="a" style="left:48px;top:966px;width:351px;height:1px;background:#2b2b2b;"></div>
<svg style="left:50px;top:970px" width="16" height="16" viewBox="0 0 16 16"><path d="M5.8 3L10.8 8L5.8 13" stroke="#cccccc" stroke-width="1.2" fill="none"/></svg>
<div class="t" style="left:68px;top:973px;font-size:11px;font-weight:bold;color:#cccccc;transform:scaleX(0.94);transform-origin:0 0">TIMELINE</div>
<div class="a" style="left:48px;top:988px;width:351px;height:22px;background:#181818;"></div>
<div class="a" style="left:48px;top:988px;width:351px;height:1px;background:#2b2b2b;"></div>
<svg style="left:50px;top:992px" width="16" height="16" viewBox="0 0 16 16"><path d="M5.8 3L10.8 8L5.8 13" stroke="#cccccc" stroke-width="1.2" fill="none"/></svg>
<div class="t" style="left:68px;top:995px;font-size:11px;font-weight:bold;color:#cccccc;transform:scaleX(0.94);transform-origin:0 0">PROJECT COMPONENTS</div>
<div class="a" style="left:468px;top:149px;width:1px;height:861px;background:#404040;"></div>
<div class="a" style="left:499px;top:149px;width:1px;height:402.79999999999995px;background:#404040;"></div>
<div class="a" style="left:530px;top:209.8px;width:1px;height:38.0px;background:#404040;"></div>
<div class="a" style="left:530px;top:304.8px;width:1px;height:133.0px;background:#404040;"></div>
<div class="a" style="left:530px;top:494.8px;width:1px;height:37.99999999999994px;background:#404040;"></div>
<div class="a" style="left:560px;top:361.8px;width:1px;height:19.0px;background:#404040;"></div>
<div class="a" style="left:499px;top:627.8px;width:1px;height:19.0px;background:#404040;"></div>
<div class="a" style="left:499px;top:722.8px;width:1px;height:209.0px;background:#404040;"></div>
<div class="a" style="left:499px;top:988.8px;width:1px;height:21.200000000000045px;background:#707070;"></div>
<div class="ln" style="left:402px;top:152.8px;">380</div>
<div class="code" style="left:468.2px;top:152.8px">        <span class="b1">}</span><span class="b3">)</span>;</div>
<div class="ln" style="left:402px;top:171.8px;">381</div>
<div class="code" style="left:468.2px;top:171.8px"></div>
<div class="ln" style="left:402px;top:190.8px;">382</div>
<div class="code" style="left:468.2px;top:190.8px">        <span class="v">volume_up_button_</span>.<span class="fn">OnLongPress</span><span class="b3">(</span><span class="b1">[</span><span class="kw">this</span><span class="b1">]</span><span class="b1">()</span> <span class="b1">{</span></div>
<div class="ln" style="left:402px;top:209.8px;">383</div>
<div class="code" style="left:468.2px;top:209.8px">            <span class="fn">GetAudioCodec</span><span class="b2">()</span>-&gt;<span class="fn">SetOutputVolume</span><span class="b2">(</span><span class="n">100</span><span class="b2">)</span>;</div>
<div class="ln" style="left:402px;top:228.8px;">384</div>
<div class="code" style="left:468.2px;top:228.8px">            <span class="fn">GetDisplay</span><span class="b2">()</span>-&gt;<span class="fn">ShowNotification</span><span class="b2">(</span><span class="ty">Lang</span>::<span class="ty">Strings</span>::<span class="en">MAX_VOLUME</span><span class="b2">)</span>;</div>
<div class="ln" style="left:402px;top:247.8px;">385</div>
<div class="code" style="left:468.2px;top:247.8px">        <span class="b1">}</span><span class="b3">)</span>;</div>
<div class="ln" style="left:402px;top:266.8px;">386</div>
<div class="code" style="left:468.2px;top:266.8px"></div>
<div class="ln" style="left:402px;top:285.8px;">387</div>
<div class="code" style="left:468.2px;top:285.8px">        <span class="v">volume_down_button_</span>.<span class="fn">OnClick</span><span class="b3">(</span><span class="b1">[</span><span class="kw">this</span><span class="b1">]</span><span class="b1">()</span> <span class="b1">{</span></div>
<div class="ln" style="left:402px;top:304.8px;">388</div>
<div class="code" style="left:468.2px;top:304.8px">            <span class="kw">auto</span> <span class="v">codec</span> = <span class="fn">GetAudioCodec</span><span class="b2">()</span>;</div>
<div class="ln" style="left:402px;top:323.8px;">389</div>
<div class="code" style="left:468.2px;top:323.8px">            <span class="kw">auto</span> <span class="v">volume</span> = <span class="v">codec</span>-&gt;<span class="fn">output_volume</span><span class="b2">()</span> - <span class="n">10</span>;</div>
<div class="ln" style="left:402px;top:342.8px;">390</div>
<div class="code" style="left:468.2px;top:342.8px">            <span class="ctl">if</span> <span class="b2">(</span><span class="v">volume</span> &lt; <span class="n">0</span><span class="b2">)</span> <span class="b2">{</span></div>
<div class="ln" style="left:402px;top:361.8px;">391</div>
<div class="code" style="left:468.2px;top:361.8px">                <span class="v">volume</span> = <span class="n">0</span>;</div>
<div class="ln" style="left:402px;top:380.8px;">392</div>
<div class="code" style="left:468.2px;top:380.8px">            <span class="b2">}</span></div>
<div class="ln" style="left:402px;top:399.8px;">393</div>
<div class="code" style="left:468.2px;top:399.8px">            <span class="v">codec</span>-&gt;<span class="fn">SetOutputVolume</span><span class="b2">(</span><span class="v">volume</span><span class="b2">)</span>;</div>
<div class="ln" style="left:402px;top:418.8px;">394</div>
<div class="code" style="left:468.2px;top:418.8px">            <span class="fn">GetDisplay</span><span class="b2">()</span>-&gt;<span class="fn">ShowNotification</span><span class="b2">(</span><span class="ty">Lang</span>::<span class="ty">Strings</span>::<span class="en">VOLUME</span> + <span class="ty">std</span>::<span class="fn">to_string</span><span class="b3">(</span><span class="v">volume</span><span class="b3">)</span><span class="b2">)</span>;</div>
<div class="ln" style="left:402px;top:437.8px;">395</div>
<div class="code" style="left:468.2px;top:437.8px">        <span class="b1">}</span><span class="b3">)</span>;</div>
<div class="ln" style="left:402px;top:456.8px;">396</div>
<div class="code" style="left:468.2px;top:456.8px"></div>
<div class="ln" style="left:402px;top:475.8px;">397</div>
<div class="code" style="left:468.2px;top:475.8px">        <span class="v">volume_down_button_</span>.<span class="fn">OnLongPress</span><span class="b3">(</span><span class="b1">[</span><span class="kw">this</span><span class="b1">]</span><span class="b1">()</span> <span class="b1">{</span></div>
<div class="ln" style="left:402px;top:494.8px;">398</div>
<div class="code" style="left:468.2px;top:494.8px">            <span class="fn">GetAudioCodec</span><span class="b2">()</span>-&gt;<span class="fn">SetOutputVolume</span><span class="b2">(</span><span class="n">0</span><span class="b2">)</span>;</div>
<div class="ln" style="left:402px;top:513.8px;">399</div>
<div class="code" style="left:468.2px;top:513.8px">            <span class="fn">GetDisplay</span><span class="b2">()</span>-&gt;<span class="fn">ShowNotification</span><span class="b2">(</span><span class="ty">Lang</span>::<span class="ty">Strings</span>::<span class="en">MUTED</span><span class="b2">)</span>;</div>
<div class="ln" style="left:402px;top:532.8px;">400</div>
<div class="code" style="left:468.2px;top:532.8px">        <span class="b1">}</span><span class="b3">)</span>;</div>
<div class="ln" style="left:402px;top:551.8px;">401</div>
<div class="code" style="left:468.2px;top:551.8px">    <span class="b2">}</span></div>
<div class="ln" style="left:402px;top:570.8px;">402</div>
<div class="code" style="left:468.2px;top:570.8px"></div>
<div class="ln" style="left:402px;top:589.8px;">403</div>
<div class="code" style="left:468.2px;top:589.8px">    <span class="cm">// </span><span class="cm" style="font-size:14px;letter-spacing:0">物联网初始化，逐步迁移到</span><span class="cm"> MCP </span><span class="cm" style="font-size:14px;letter-spacing:0">协议</span></div>
<div class="ln" style="left:402px;top:608.8px;">404</div>
<div class="code" style="left:468.2px;top:608.8px">    <span class="kw">void</span> <span class="fn">InitializeTools</span><span class="b2">()</span> <span class="b2">{</span></div>
<div class="ln" style="left:402px;top:627.8px;">405</div>
<div class="code" style="left:468.2px;top:627.8px">        <span class="kw">static</span> <span class="ty">LampController</span> <span class="fn">lamp</span><span class="b3">(</span><span class="mac">LAMP_GPIO</span><span class="b3">)</span>;</div>
<div class="ln" style="left:402px;top:646.8px;">406</div>
<div class="code" style="left:468.2px;top:646.8px">    <span class="b2">}</span></div>
<div class="ln" style="left:402px;top:665.8px;">407</div>
<div class="code" style="left:468.2px;top:665.8px"></div>
<div class="ln" style="left:402px;top:684.8px;">408</div>
<div class="code" style="left:468.2px;top:684.8px"><span class="kw">public:</span></div>
<div class="ln" style="left:402px;top:703.8px;">409</div>
<div class="code" style="left:468.2px;top:703.8px">    <span class="fn">CompactWifiBoard</span><span class="b2">()</span> :</div>
<div class="ln" style="left:402px;top:722.8px;">410</div>
<div class="code" style="left:468.2px;top:722.8px">        <span class="v">boot_button_</span><span class="b2">(</span><span class="mac">BOOT_BUTTON_GPIO</span><span class="b2">)</span>,</div>
<div class="ln" style="left:402px;top:741.8px;">411</div>
<div class="code" style="left:468.2px;top:741.8px">        <span class="v">touch_button_</span><span class="b2">(</span><span class="mac">TOUCH_BUTTON_GPIO</span>, <span class="kw">true</span>,<span class="n">2500</span>, <span class="n">1000</span><span class="b2">)</span>,</div>
<div class="ln" style="left:402px;top:760.8px;">412</div>
<div class="code" style="left:468.2px;top:760.8px">        <span class="v">volume_up_button_</span><span class="b2">(</span><span class="mac">VOLUME_UP_BUTTON_GPIO</span>, <span class="kw">true</span>,<span class="n">2500</span>, <span class="n">1000</span><span class="b2">)</span>,</div>
<div class="ln" style="left:402px;top:779.8px;">413</div>
<div class="code" style="left:468.2px;top:779.8px">        <span class="v">volume_down_button_</span><span class="b2">(</span><span class="mac">VOLUME_DOWN_BUTTON_GPIO</span>, <span class="kw">true</span>, <span class="n">2500</span>, <span class="n">1000</span><span class="b2">)</span>,</div>
<div class="ln" style="left:402px;top:798.8px;">414</div>
<div class="code" style="left:468.2px;top:798.8px">        <span class="v">exit_button_</span><span class="b2">(</span><span class="mac">EXIT_BUTTON_GPIO</span>, <span class="kw">true</span>, <span class="n">2500</span>, <span class="n">1000</span><span class="b2">)</span>,</div>
<div class="ln" style="left:402px;top:817.8px;">415</div>
<div class="code" style="left:468.2px;top:817.8px">        <span class="v">weather_button_</span><span class="b2">(</span><span class="mac">WEATHER_BUTTON_GPIO</span>, <span class="kw">true</span>, <span class="n">2500</span>, <span class="n">1000</span><span class="b2">)</span>,</div>
<div class="ln" style="left:402px;top:836.8px;">416</div>
<div class="code" style="left:468.2px;top:836.8px">        <span class="v">story_button_</span><span class="b2">(</span><span class="mac">STORY_BUTTON_GPIO</span>, <span class="kw">true</span>, <span class="n">2500</span>, <span class="n">1000</span><span class="b2">)</span><span class="b2">{</span></div>
<div class="ln" style="left:402px;top:855.8px;">417</div>
<div class="code" style="left:468.2px;top:855.8px">        <span class="fn">InitializeDisplayI2c</span><span class="b3">()</span>;</div>
<div class="ln" style="left:402px;top:874.8px;">418</div>
<div class="code" style="left:468.2px;top:874.8px">        <span class="fn">InitializeSsd1306Display</span><span class="b3">()</span>;</div>
<div class="ln" style="left:402px;top:893.8px;">419</div>
<div class="code" style="left:468.2px;top:893.8px">        <span class="fn">InitializeButtons</span><span class="b3">()</span>;</div>
<div class="ln" style="left:402px;top:912.8px;">420</div>
<div class="code" style="left:468.2px;top:912.8px">        <span class="fn">InitializeTools</span><span class="b3">()</span>;</div>
<div class="ln" style="left:402px;top:931.8px;">421</div>
<div class="code" style="left:468.2px;top:931.8px">    <span class="b2">}</span></div>
<div class="ln" style="left:402px;top:950.8px;">422</div>
<div class="code" style="left:468.2px;top:950.8px"></div>
<div class="ln" style="left:402px;top:969.8px;">423</div>
<div class="code" style="left:468.2px;top:969.8px">    <span class="kw">virtual</span> <span class="ty">Led</span>* <span class="fn">GetLed</span><span class="b2">()</span> <span class="kw">override</span> <span class="b2">{</span></div>
<div class="ln" style="left:402px;top:988.8px;">424</div>
<div class="code" style="left:468.2px;top:988.8px">        <span class="kw">static</span> <span class="ty">SingleLed</span> <span class="fn">led</span><span class="b3">(</span><span class="mac">BUILTIN_LED_GPIO</span><span class="b3">)</span>;</div>
<div class="a" style="left:400px;top:91px;width:1083px;height:58px;background:#1f1f1f;"></div>
<div class="ln" style="left:402px;top:93.3px;">28</div>
<div class="code" style="left:468.2px;top:93.3px"><span class="kw">class</span> <span class="ty">CompactWifiBoard</span> : <span class="kw">public</span> <span class="ty">WifiBoard</span> <span class="b1">{</span></div>
<div class="ln" style="left:402px;top:112.3px;">111</div>
<div class="code" style="left:468.2px;top:112.3px">    <span class="kw">void</span> <span class="fn">InitializeButtons</span><span class="b2">()</span> <span class="b2">{</span></div>
<div class="ln" style="left:402px;top:131.3px;">372</div>
<div class="code" style="left:468.2px;top:131.3px">        <span class="v">volume_up_button_</span>.<span class="fn">OnClick</span><span class="b3">(</span><span class="b1">[</span><span class="kw">this</span><span class="b1">]</span><span class="b1">()</span> <span class="b1">{</span></div>
<div class="a" style="left:402px;top:149px;width:1081px;height:1.5px;background:#050505;box-shadow:0 1px 2px #000;"></div>
<div class="a" style="left:737px;top:969px;width:8px;height:19px;background:rgba(0,100,0,0.1);border:1px solid #888888"></div>
<div class="a" style="left:400px;top:1007px;width:1083px;height:3px;background:#252525;"></div>
<svg style="left:10px;top:1013px" width="12" height="16" viewBox="0 0 12 16"><path d="M1 5L6 10L1 15M11 1L6 6L11 11" stroke="#cccccc" stroke-width="1.1" fill="none"/></svg>
<svg style="left:40px;top:1013px" width="16" height="16" viewBox="0 0 16 16"><path d="M1.5 4Q1.5 2 3.5 2H6L7 3H12Q13.5 3 13.5 4.5V10Q13.5 11.5 12 11.5H3.5Q1.5 11.5 1.5 9.5Z" stroke="#cccccc" stroke-width="1.1" fill="none"/><path d="M4 13.5H13Q15 13.5 15 11.5V6" stroke="#cccccc" stroke-width="1.1" fill="none"/></svg>
<svg style="left:73px;top:1013px" width="16" height="16" viewBox="0 0 16 16"><path d="M1.5 3L4.5 5.2Q8 4.2 11.5 5.2L14.5 3V10Q14.5 14.5 8 14.5Q1.5 14.5 1.5 10Z" fill="#cccccc"/><rect x="4" y="9.5" width="8" height="3.5" rx="1.75" fill="#181818"/><circle cx="6" cy="11.2" r="0.9" fill="#cccccc"/><circle cx="10" cy="11.2" r="0.9" fill="#cccccc"/></svg>
<div class="t" style="left:91px;top:1015.5px;font-size:12px;color:#cccccc;transform:scaleX(0.91);transform-origin:0 0">ESP-IDF v5.5.1</div>
<svg style="left:183px;top:1013px" width="16" height="16" viewBox="0 0 16 16"><path d="M8 1.3L10 6H14.8L11 9.2L12.4 14.2L8 11.3L3.6 14.2L5 9.2L1.2 6H6Z" stroke="#cccccc" stroke-width="1.1" fill="none" stroke-linejoin="round"/></svg>
<div class="t" style="left:202px;top:1015.5px;font-size:12px;color:#cccccc;transform:scaleX(0.91);transform-origin:0 0">UART</div>
<svg style="left:248px;top:1013px" width="16" height="16" viewBox="0 0 16 16"><path d="M5.5 1.5V5M10.5 1.5V5M3.5 5H12.5V8.5Q12.5 12 8 12Q3.5 12 3.5 8.5Z M8 12V15" stroke="#cccccc" stroke-width="1.1" fill="none"/></svg>
<div class="t" style="left:265.5px;top:1015.5px;font-size:12px;color:#cccccc;transform:scaleX(0.91);transform-origin:0 0">COM27</div>
<svg style="left:322px;top:1013px" width="16" height="16" viewBox="0 0 16 16"><rect x="3.5" y="3.5" width="9" height="9" rx="1" stroke="#cccccc" stroke-width="1.1" fill="none"/><circle cx="8" cy="8" r="2" stroke="#cccccc" stroke-width="1.1" fill="none"/><path d="M5.5 1V3.5M8 1V3.5M10.5 1V3.5M5.5 12.5V15M8 12.5V15M10.5 12.5V15M1 5.5H3.5M1 8H3.5M1 10.5H3.5M12.5 5.5H15M12.5 8H15M12.5 10.5H15" stroke="#cccccc" stroke-width="1.1"/></svg>
<div class="t" style="left:341.5px;top:1015.5px;font-size:12px;color:#cccccc;transform:scaleX(0.91);transform-origin:0 0">esp32s3</div>
<svg style="left:400px;top:1013px" width="16" height="16" viewBox="0 0 16 16"><path d="M14.90 6.80 L14.90 9.20 L12.73 8.83 L11.93 10.76 L13.73 12.03 L12.03 13.73 L10.76 11.93 L8.83 12.73 L9.20 14.90 L6.80 14.90 L7.17 12.73 L5.24 11.93 L3.97 13.73 L2.27 12.03 L4.07 10.76 L3.27 8.83 L1.10 9.20 L1.10 6.80 L3.27 7.17 L4.07 5.24 L2.27 3.97 L3.97 2.27 L5.24 4.07 L7.17 3.27 L6.80 1.10 L9.20 1.10 L8.83 3.27 L10.76 4.07 L12.03 2.27 L13.73 3.97 L11.93 5.24 L12.73 7.17Z" stroke="#cccccc" stroke-width="1.1" fill="none" stroke-linejoin="round"/><circle cx="8" cy="8" r="2" stroke="#cccccc" stroke-width="1.1" fill="none"/></svg>
<svg style="left:431px;top:1013px" width="16" height="16" viewBox="0 0 16 16"><path d="M2 3.5H14M6 3.5V2H10V3.5M3.5 3.5L4.5 14.5H11.5L12.5 3.5M6.5 6V12.5M9.5 6V12.5" stroke="#cccccc" stroke-width="1.1" fill="none"/></svg>
<svg style="left:465px;top:1013px" width="16" height="16" viewBox="0 0 16 16"><path d="M2 14L8 8Q7 5 9 3Q11 1.5 13.5 2.5L11 5L11.5 6.5L13 7L15 4.5Q15.5 8 13 9.5Q11 10.5 9 9.5L3.5 15Z" stroke="#cccccc" stroke-width="1.1" fill="none" stroke-linejoin="round"/></svg>
<svg style="left:496px;top:1013px" width="16" height="16" viewBox="0 0 16 16"><path d="M9.5 1.5L4 9H8L6 15L12.5 6.5H8.5L11 1.5Z" stroke="#cccccc" stroke-width="1.1" fill="none" stroke-linejoin="round"/></svg>
<svg style="left:528px;top:1013px" width="16" height="16" viewBox="0 0 16 16"><rect x="1.5" y="2" width="13" height="9.5" rx="1.5" stroke="#cccccc" stroke-width="1.1" fill="none"/><path d="M8 11.5V14M4.5 14.5H11.5" stroke="#cccccc" stroke-width="1.1"/></svg>
<svg style="left:559px;top:1013px" width="16" height="16" viewBox="0 0 16 16"><path d="M6 6V2.5L14 7.5L8.5 11" stroke="#cccccc" stroke-width="1.1" fill="none"/><ellipse cx="5" cy="12" rx="2.3" ry="2.8" stroke="#cccccc" stroke-width="1.1" fill="none"/><path d="M1.5 11H2.7M7.3 11H8.5M2 14.5L3 13.5M8 14.5L7 13.5M3.5 9Q5 8 6.5 9" stroke="#cccccc" stroke-width="1"/></svg>
<svg style="left:592px;top:1013px" width="16" height="16" viewBox="0 0 16 16"><path d="M8 1.5Q9 5 11.5 7.5Q13 9.5 12.5 11.5Q11.5 14.5 8 14.5Q4.5 14.5 3.5 11.5Q3 9 5 7L6 9Q6.5 5 8 1.5Z" stroke="#cccccc" stroke-width="1.1" fill="none" stroke-linejoin="round"/></svg>
<svg style="left:624px;top:1013px" width="16" height="16" viewBox="0 0 16 16"><rect x="1.5" y="2" width="13" height="12" rx="1.5" stroke="#cccccc" stroke-width="1.1" fill="none"/><path d="M4 5.5L6.5 8L4 10.5M7.5 11H12" stroke="#cccccc" stroke-width="1.1" fill="none"/></svg>
<svg style="left:656px;top:1013px" width="16" height="16" viewBox="0 0 16 16"><rect x="2" y="2.5" width="12" height="11" rx="1.5" stroke="#cccccc" stroke-width="1.1" fill="none"/><path d="M4.5 8H11M8.5 5.5L11 8L8.5 10.5" stroke="#cccccc" stroke-width="1.2" fill="none"/></svg>
<svg style="left:688px;top:1013px" width="16" height="16" viewBox="0 0 16 16"><circle cx="8" cy="8" r="6.5" stroke="#cccccc" stroke-width="1.1" fill="none"/><path d="M5.5 5.5L10.5 10.5M10.5 5.5L5.5 10.5" stroke="#cccccc" stroke-width="1.1"/></svg>
<div class="t" style="left:707px;top:1015.5px;font-size:12px;color:#cccccc;transform:scaleX(0.91);transform-origin:0 0">17</div>
<svg style="left:723px;top:1013px" width="16" height="16" viewBox="0 0 16 16"><path d="M8 1.5L15 14H1Z" stroke="#cccccc" stroke-width="1.1" fill="none" stroke-linejoin="round"/><path d="M8 5.5V10M8 11.5V12.8" stroke="#cccccc" stroke-width="1.2"/></svg>
<div class="t" style="left:742px;top:1015.5px;font-size:12px;color:#cccccc;transform:scaleX(0.91);transform-origin:0 0">0</div>
<svg style="left:766px;top:1013px" width="16" height="16" viewBox="0 0 16 16"><path d="M14.90 6.80 L14.90 9.20 L12.73 8.83 L11.93 10.76 L13.73 12.03 L12.03 13.73 L10.76 11.93 L8.83 12.73 L9.20 14.90 L6.80 14.90 L7.17 12.73 L5.24 11.93 L3.97 13.73 L2.27 12.03 L4.07 10.76 L3.27 8.83 L1.10 9.20 L1.10 6.80 L3.27 7.17 L4.07 5.24 L2.27 3.97 L3.97 2.27 L5.24 4.07 L7.17 3.27 L6.80 1.10 L9.20 1.10 L8.83 3.27 L10.76 4.07 L12.03 2.27 L13.73 3.97 L11.93 5.24 L12.73 7.17Z" stroke="#cccccc" stroke-width="1.1" fill="none" stroke-linejoin="round"/><circle cx="8" cy="8" r="2" stroke="#cccccc" stroke-width="1.1" fill="none"/></svg>
<div class="t" style="left:784px;top:1015.5px;font-size:12px;color:#cccccc;transform:scaleX(0.91);transform-origin:0 0">Build</div>
<svg style="left:827px;top:1013px" width="16" height="16" viewBox="0 0 16 16"><ellipse cx="8" cy="9.5" rx="3.8" ry="4.8" stroke="#cccccc" stroke-width="1.1" fill="none"/><path d="M5.5 4.5Q8 2 10.5 4.5M1.5 8H4.2M11.8 8H14.5M1.5 12H4.2M11.8 12H14.5M3 2.5L5 5M13 2.5L11 5M3 15.5L5 13.5M13 15.5L11 13.5" stroke="#cccccc" stroke-width="1.1" fill="none"/></svg>
<svg style="left:860px;top:1013px" width="16" height="16" viewBox="0 0 16 16"><path d="M3.5 2L13.5 8L3.5 14Z" stroke="#cccccc" stroke-width="1.1" fill="none" stroke-linejoin="round"/></svg>
<div class="t" style="left:1224px;top:1015.5px;font-size:12px;color:#cccccc;transform:scaleX(0.91);transform-origin:0 0">[ESP-IDF: QEMU]</div>
<div class="t" style="left:1329px;top:1015.5px;font-size:12px;color:#cccccc;transform:scaleX(0.91);transform-origin:0 0">[ESP-IDF: OpenOCD Server]</div>
</body></html>
